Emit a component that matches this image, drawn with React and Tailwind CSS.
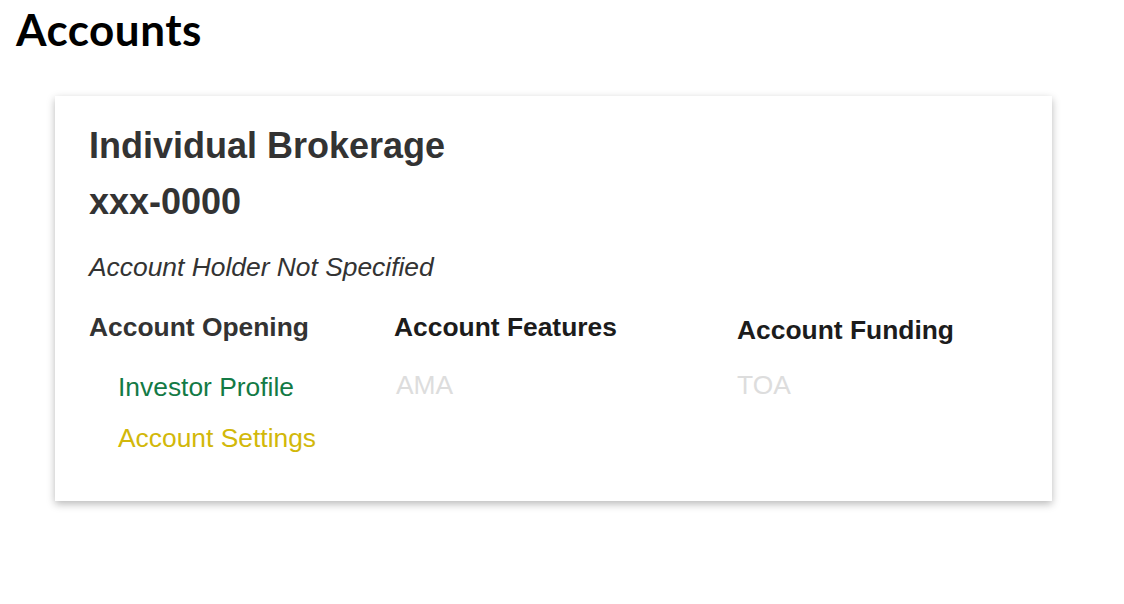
const ColumnHeading = ({ children, className = '' }) => (
  <h3 className={`text-[26.4px] leading-[30px] font-bold ${className}`}>{children}</h3>
);

const App = () => {
  return (
    <div className="min-h-screen bg-white font-['Liberation_Sans',Arial,sans-serif]">
      <h1 className="pl-[16px] pt-[5px] text-[44px] leading-[48px] font-bold tracking-[0.5px] text-black font-['Lato',sans-serif]">
        Accounts
      </h1>

      <div className="ml-[55px] mt-[43px] w-[997px] bg-white shadow-[0_3px_8px_rgba(0,0,0,0.28)] pl-[34px] pr-8 pt-[29px] pb-[48px]">
        <h2 className="text-[36px] leading-[42px] font-bold text-[#333333]">Individual Brokerage</h2>
        <p className="mt-[14px] text-[36px] leading-[42px] font-bold text-[#333333]">xxx-0000</p>
        <p className="mt-[29px] text-[26.4px] leading-[30px] italic text-[#333333]">Account Holder Not Specified</p>

        <div className="mt-[30px] grid grid-cols-[305px_343px_1fr]">
          {/* Account opening */}
          <div>
            <ColumnHeading className="text-[#333333]">Account Opening</ColumnHeading>
            <div className="pl-[29px]">
              <a href="#" className="block mt-[30px] text-[26.4px] leading-[30px] text-[#137a45]">Investor Profile</a>
              <a href="#" className="block mt-[21px] text-[26.4px] leading-[30px] text-[#d2b80a]">Account Settings</a>
            </div>
          </div>

          {/* Account features */}
          <div>
            <ColumnHeading className="text-[#1c1c1c]">Account Features</ColumnHeading>
            <p className="mt-[28px] pl-[2px] text-[26.4px] leading-[30px] text-[#dddddd]">AMA</p>
          </div>

          {/* Account funding */}
          <div className="pt-[3px]">
            <ColumnHeading className="text-[#1c1c1c]">Account Funding</ColumnHeading>
            <p className="mt-[25px] text-[26.4px] leading-[30px] text-[#dddddd]">TOA</p>
          </div>
        </div>
      </div>
    </div>
  );
};

export default App;
